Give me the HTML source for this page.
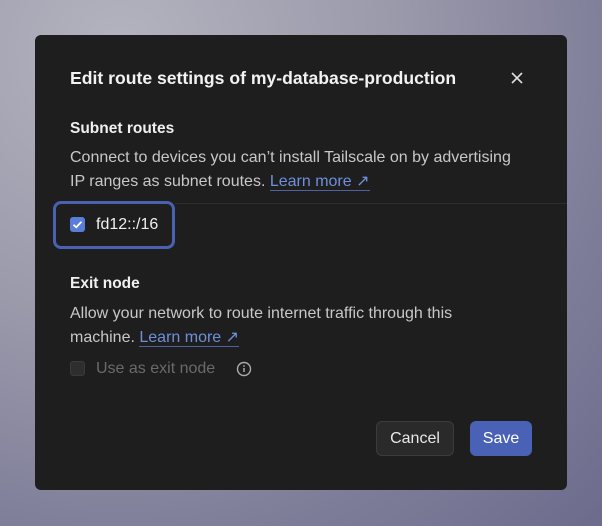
<!DOCTYPE html>
<html><head><style>
*{margin:0;padding:0;box-sizing:border-box}
body{width:602px;height:526px;overflow:hidden;font-family:"Liberation Sans",sans-serif;
background:radial-gradient(ellipse at 20% 10%,#b4b3bf 0%,#9b9aab 40%,#7d7c98 75%,#6c6b8c 100%);position:relative}
.d{position:absolute;left:35px;top:35px;width:532px;height:455px;background:#1e1e1e;border-radius:6px;color:#e6e6e6}
.a{position:absolute;white-space:nowrap}
.t{font-weight:bold;font-size:17.6px;color:#f2f2f2}
.h{font-weight:bold;font-size:15.5px;color:#f0f0f0}
.p{font-size:16px;color:#c8c8c8;line-height:24px}
.l{color:#6f8fdc;border-bottom:1px solid #4d63a0}
.cb{position:absolute;width:15px;height:15px;border-radius:3px}
.btn{position:absolute;height:35px;border-radius:6px;font-size:16px;display:flex;align-items:center;justify-content:center}
</style></head><body>
<div class="d">
<div class="a t" style="left:35px;top:33px">Edit route settings of my-database-production</div>
<svg class="a" style="left:476px;top:37px" width="12" height="12" viewBox="0 0 12 12"><path d="M1 1L11 11M11 1L1 11" stroke="#ddd" stroke-width="1.6"/></svg>
<div class="a h" style="left:35px;top:85px">Subnet routes</div>
<div class="a p" style="left:35px;top:111px">Connect to devices you can’t install Tailscale on by advertising<br>IP ranges as subnet routes. <span class="l">Learn more ↗</span></div>
<div class="a" style="left:140px;top:168px;width:392px;height:1px;background:#2e2e2e"></div>
<div class="a" style="left:18px;top:166px;width:122px;height:48px;border:3px solid #4a61b0;border-radius:8px"></div>
<div class="cb" style="left:35px;top:182px;background:#5a7ddb"><svg width="15" height="15" viewBox="0 0 15 15"><path d="M3.5 7.8L6.2 10.3L11.5 4.8" stroke="#fff" stroke-width="1.8" fill="none"/></svg></div>
<div class="a" style="left:61px;top:181px;font-size:16px;color:#f0f0f0">fd12::/16</div>
<div class="a h" style="left:35px;top:240px">Exit node</div>
<div class="a p" style="left:35px;top:267px">Allow your network to route internet traffic through this<br>machine. <span class="l">Learn more ↗</span></div>
<div class="cb" style="left:35px;top:326px;background:#2e2e2e;border:1px solid #3a3a3a"></div>
<div class="a" style="left:61px;top:325px;font-size:16px;color:#6a6a6a">Use as exit node</div>
<svg class="a" style="left:201px;top:326px" width="16" height="16" viewBox="0 0 16 16"><circle cx="8" cy="8" r="6.5" stroke="#aaa" stroke-width="1.4" fill="none"/><path d="M8 7v4" stroke="#aaa" stroke-width="1.5"/><circle cx="8" cy="5" r="0.9" fill="#aaa"/></svg>
<div class="btn" style="left:341px;top:386px;width:78px;background:#2a2a2a;border:1px solid #3c3c3c;color:#e8e8e8">Cancel</div>
<div class="btn" style="left:435px;top:386px;width:62px;background:#4a62b5;color:#fff">Save</div>
</div>
</body></html>
